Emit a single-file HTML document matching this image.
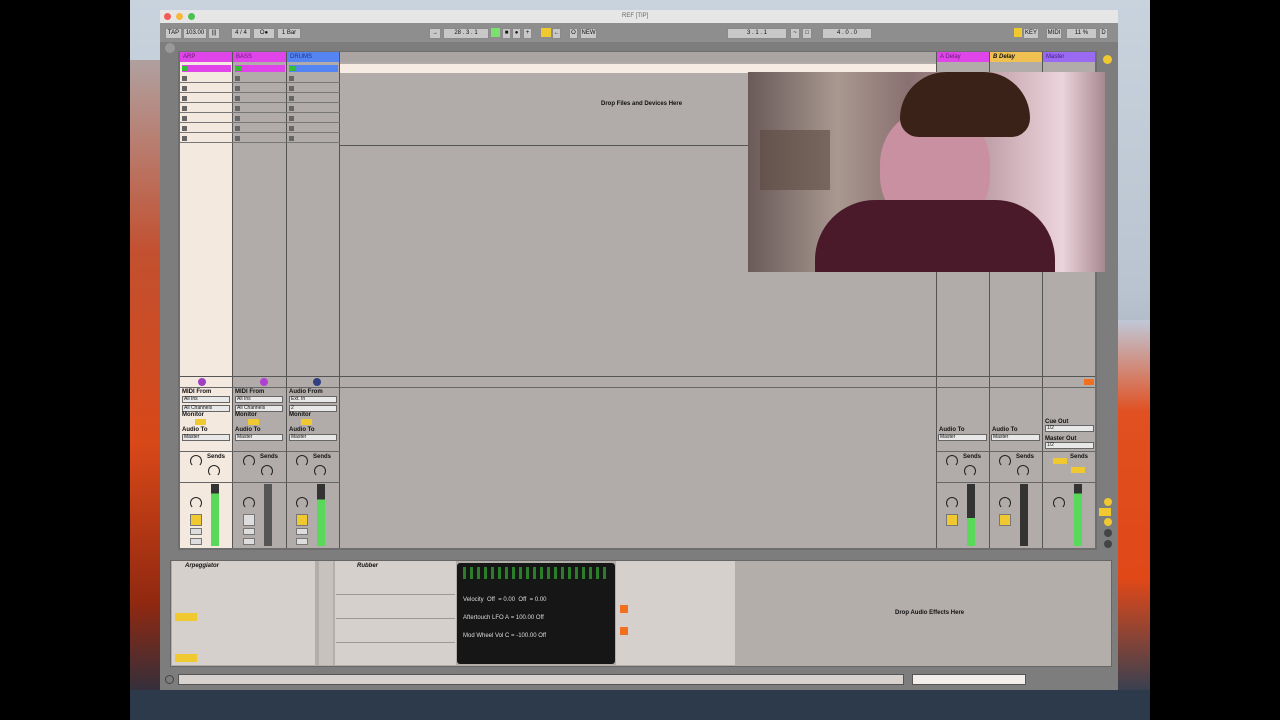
<!DOCTYPE html>
<html><head><meta charset="utf-8"><style>
*{margin:0;padding:0;box-sizing:border-box}
body{width:1280px;height:720px;background:#000;position:relative;overflow:hidden;font-family:"Liberation Sans",sans-serif;font-size:6px;color:#111}
.a{position:absolute}
.t{position:absolute;font-size:6px;font-weight:bold;white-space:nowrap}
.btn{position:absolute;background:#c8c8c8;border:1px solid #8a8a8a;font-size:6px;text-align:center;line-height:9px}
.sq{position:absolute;width:5px;height:5px;background:#666;border:1px solid #333}
.knob{position:absolute;width:12px;height:12px;border:1.5px solid #222;border-radius:50%;border-bottom-color:transparent}
.dd{position:absolute;height:7px;background:#e8e8e8;border:1px solid #666;font-size:5px;line-height:5px;padding-left:1px}
</style></head><body>
<div class="a" style="left:130px;top:0;width:1020px;height:720px;background:linear-gradient(#c9d3de 0,#b9c4d0 40%,#8d98a8 70%,#3c4c60 95%,#2a3648 100%)"></div>
<div class="a" style="left:130px;top:60px;width:32px;height:640px;background:linear-gradient(#b0a0a0,#c25030 30%,#d84818 60%,#902810 85%,#2a3040)"></div>
<div class="a" style="left:1118px;top:320px;width:32px;height:370px;background:linear-gradient(#c0c8d8,#e05020 25%,#e04818 70%,#3a4050)"></div>
<div class="a" style="left:130px;top:690px;width:1020px;height:30px;background:#2c3a4c"></div>
<div class="a" style="left:160px;top:10px;width:958px;height:680px;background:#7d7d7d"></div>
<div class="a" style="left:160px;top:10px;width:958px;height:13px;background:#e6e6e6"></div>
<div class="a" style="left:164px;top:13px;width:7px;height:7px;border-radius:50%;background:#f25c54"></div>
<div class="a" style="left:176px;top:13px;width:7px;height:7px;border-radius:50%;background:#f5b83c"></div>
<div class="a" style="left:188px;top:13px;width:7px;height:7px;border-radius:50%;background:#4cc050"></div>
<div class="t" style="left:622px;top:13px;color:#666;font-weight:normal">REF [TIP]</div>
<div class="a" style="left:160px;top:23px;width:958px;height:19px;background:#8e8e8e"></div>
<div class="btn" style="left:165px;top:28px;width:17px">TAP</div>
<div class="btn" style="left:183px;top:28px;width:24px">103.00</div>
<div class="btn" style="left:208px;top:28px;width:12px">|||</div>
<div class="btn" style="left:231px;top:28px;width:20px">4 / 4</div>
<div class="btn" style="left:253px;top:28px;width:22px">O●</div>
<div class="btn" style="left:277px;top:28px;width:24px">1 Bar</div>
<div class="btn" style="left:429px;top:28px;width:12px">→</div>
<div class="btn" style="left:443px;top:28px;width:46px">28 . 3 . 1</div>
<div class="a" style="left:491px;top:28px;width:9px;height:9px;background:#7ce070"></div>
<div class="btn" style="left:502px;top:28px;width:9px">■</div>
<div class="btn" style="left:512px;top:28px;width:9px">●</div>
<div class="btn" style="left:523px;top:28px;width:9px">+</div>
<div class="a" style="left:541px;top:28px;width:10px;height:9px;background:#f0c830"></div>
<div class="btn" style="left:552px;top:28px;width:9px">←</div>
<div class="btn" style="left:569px;top:28px;width:9px">O</div>
<div class="btn" style="left:580px;top:28px;width:17px">NEW</div>
<div class="btn" style="left:727px;top:28px;width:60px">3 . 1 . 1</div>
<div class="btn" style="left:790px;top:28px;width:10px">~</div>
<div class="btn" style="left:802px;top:28px;width:10px">□</div>
<div class="btn" style="left:822px;top:28px;width:50px">4 . 0 . 0</div>
<div class="a" style="left:1014px;top:28px;width:8px;height:9px;background:#f0c830"></div>
<div class="btn" style="left:1023px;top:28px;width:16px">KEY</div>
<div class="btn" style="left:1046px;top:28px;width:16px">MIDI</div>
<div class="btn" style="left:1066px;top:28px;width:31px">11 %</div>
<div class="btn" style="left:1099px;top:28px;width:9px">D</div>
<div class="a" style="left:165px;top:43px;width:10px;height:10px;border-radius:50%;background:#999"></div>
<div class="a" style="left:178px;top:51px;width:919px;height:499px;background:#6e6e6e"></div>
<div class="a" style="left:180px;top:52px;width:915px;height:496px;background:#b1aba9"></div>
<div class="a" style="left:180px;top:52px;width:52px;height:496px;background:#f4e9df"></div>
<div class="a" style="left:232px;top:52px;width:1px;height:496px;background:#555"></div>
<div class="a" style="left:286px;top:52px;width:1px;height:496px;background:#555"></div>
<div class="a" style="left:339px;top:52px;width:1px;height:496px;background:#555"></div>
<div class="a" style="left:936px;top:52px;width:1px;height:496px;background:#555"></div>
<div class="a" style="left:989px;top:52px;width:1px;height:496px;background:#555"></div>
<div class="a" style="left:1042px;top:52px;width:1px;height:496px;background:#555"></div>
<div class="a" style="left:180px;top:52px;width:52px;height:10px;background:#e045ea"></div>
<div class="a" style="left:233px;top:52px;width:53px;height:10px;background:#e045ea"></div>
<div class="a" style="left:287px;top:52px;width:52px;height:10px;background:#5585f2"></div>
<div class="a" style="left:340px;top:52px;width:596px;height:10px;background:#aaa4a2"></div>
<div class="a" style="left:937px;top:52px;width:52px;height:10px;background:#e045ea"></div>
<div class="a" style="left:990px;top:52px;width:52px;height:10px;background:#f0c050"></div>
<div class="a" style="left:1043px;top:52px;width:52px;height:10px;background:#9a6af2"></div>
<div class="t" style="left:183px;top:54px;color:#602070;font-weight:normal">ARP</div>
<div class="t" style="left:236px;top:54px;color:#602070;font-weight:normal">BASS</div>
<div class="t" style="left:290px;top:54px;color:#203080;font-weight:normal">DRUMS</div>
<div class="t" style="left:940px;top:54px;color:#602070;font-weight:normal">A Delay</div>
<div class="t" style="left:993px;top:54px;font-style:italic">B Delay</div>
<div class="t" style="left:1046px;top:54px;color:#402080;font-weight:normal">Master</div>
<div class="a" style="left:340px;top:64px;width:596px;height:9px;background:#f6ece4"></div>
<div class="a" style="left:182px;top:65px;width:49px;height:7px;background:#e045ea"></div>
<div class="a" style="left:235px;top:65px;width:50px;height:7px;background:#e045ea"></div>
<div class="a" style="left:289px;top:65px;width:49px;height:7px;background:#5585f2"></div>
<div class="a" style="left:182px;top:66px;width:6px;height:5px;background:#30c030"></div>
<div class="a" style="left:235px;top:66px;width:6px;height:5px;background:#30c030"></div>
<div class="a" style="left:289px;top:66px;width:6px;height:5px;background:#30c030"></div>
<div class="a" style="left:180px;top:73px;width:160px;height:73px;background:repeating-linear-gradient(transparent 0,transparent 9px,#777 9px,#777 10px)"></div>
<div class="a" style="left:182px;top:76px;width:5px;height:65px;background:repeating-linear-gradient(#666 0,#666 5px,transparent 5px,transparent 10px)"></div>
<div class="a" style="left:235px;top:76px;width:5px;height:65px;background:repeating-linear-gradient(#666 0,#666 5px,transparent 5px,transparent 10px)"></div>
<div class="a" style="left:289px;top:76px;width:5px;height:65px;background:repeating-linear-gradient(#666 0,#666 5px,transparent 5px,transparent 10px)"></div>
<div class="a" style="left:340px;top:145px;width:596px;height:1px;background:#555"></div>
<div class="t" style="left:601px;top:101px">Drop Files and Devices Here</div>
<div class="a" style="left:180px;top:376px;width:915px;height:1px;background:#555"></div>
<div class="a" style="left:180px;top:387px;width:915px;height:1px;background:#666"></div>
<div class="a" style="left:180px;top:451px;width:160px;height:1px;background:#666"></div>
<div class="a" style="left:180px;top:482px;width:160px;height:1px;background:#666"></div>
<div class="a" style="left:937px;top:451px;width:158px;height:1px;background:#666"></div>
<div class="a" style="left:937px;top:482px;width:158px;height:1px;background:#666"></div>
<div class="a" style="left:198px;top:378px;width:8px;height:8px;border-radius:50%;background:#a040c0"></div>
<div class="a" style="left:260px;top:378px;width:8px;height:8px;border-radius:50%;background:#b040d0"></div>
<div class="a" style="left:313px;top:378px;width:8px;height:8px;border-radius:50%;background:#304080"></div>
<div class="t" style="left:182px;top:389px">MIDI From</div>
<div class="t" style="left:235px;top:389px">MIDI From</div>
<div class="t" style="left:289px;top:389px">Audio From</div>
<div class="dd" style="left:182px;top:396px;width:48px">All Ins</div>
<div class="dd" style="left:235px;top:396px;width:48px">All Ins</div>
<div class="dd" style="left:289px;top:396px;width:48px">Ext. In</div>
<div class="dd" style="left:182px;top:405px;width:48px">All Channels</div>
<div class="dd" style="left:235px;top:405px;width:48px">All Channels</div>
<div class="dd" style="left:289px;top:405px;width:48px">2</div>
<div class="t" style="left:182px;top:412px">Monitor</div><div class="t" style="left:235px;top:412px">Monitor</div><div class="t" style="left:289px;top:412px">Monitor</div>
<div class="a" style="left:195px;top:419px;width:11px;height:6px;background:#f0c830"></div>
<div class="a" style="left:248px;top:419px;width:11px;height:6px;background:#f0c830"></div>
<div class="a" style="left:301px;top:419px;width:11px;height:6px;background:#f0c830"></div>
<div class="t" style="left:182px;top:427px">Audio To</div><div class="t" style="left:235px;top:427px">Audio To</div><div class="t" style="left:289px;top:427px">Audio To</div>
<div class="dd" style="left:182px;top:434px;width:48px">Master</div>
<div class="dd" style="left:235px;top:434px;width:48px">Master</div>
<div class="dd" style="left:289px;top:434px;width:48px">Master</div>
<div class="t" style="left:939px;top:427px">Audio To</div><div class="t" style="left:992px;top:427px">Audio To</div>
<div class="dd" style="left:938px;top:434px;width:49px">Master</div>
<div class="dd" style="left:991px;top:434px;width:49px">Master</div>
<div class="t" style="left:1045px;top:419px">Cue Out</div><div class="t" style="left:1045px;top:436px">Master Out</div>
<div class="dd" style="left:1045px;top:425px;width:49px">1/2</div>
<div class="dd" style="left:1045px;top:442px;width:49px">1/2</div>
<div class="a" style="left:1084px;top:379px;width:10px;height:6px;background:#f07020"></div>
<div class="knob" style="left:190px;top:455px"></div><div class="knob" style="left:208px;top:465px"></div>
<div class="knob" style="left:243px;top:455px"></div><div class="knob" style="left:261px;top:465px"></div>
<div class="knob" style="left:296px;top:455px"></div><div class="knob" style="left:314px;top:465px"></div>
<div class="knob" style="left:946px;top:455px"></div><div class="knob" style="left:964px;top:465px"></div>
<div class="knob" style="left:999px;top:455px"></div><div class="knob" style="left:1017px;top:465px"></div>
<div class="t" style="left:207px;top:454px">Sends</div><div class="t" style="left:260px;top:454px">Sends</div><div class="t" style="left:313px;top:454px">Sends</div>
<div class="t" style="left:963px;top:454px">Sends</div><div class="t" style="left:1016px;top:454px">Sends</div><div class="t" style="left:1070px;top:454px">Sends</div>
<div class="a" style="left:1053px;top:458px;width:14px;height:6px;background:#f0c830"></div>
<div class="a" style="left:1071px;top:467px;width:14px;height:6px;background:#f0c830"></div>
<div class="knob" style="left:190px;top:497px"></div><div class="knob" style="left:243px;top:497px"></div><div class="knob" style="left:296px;top:497px"></div>
<div class="knob" style="left:946px;top:497px"></div><div class="knob" style="left:999px;top:497px"></div><div class="knob" style="left:1053px;top:497px"></div>
<div class="a" style="left:190px;top:514px;width:12px;height:12px;background:#f0c830;border:1px solid #777"></div>
<div class="a" style="left:243px;top:514px;width:12px;height:12px;background:#ddd;border:1px solid #777"></div>
<div class="a" style="left:296px;top:514px;width:12px;height:12px;background:#f0c830;border:1px solid #777"></div>
<div class="a" style="left:946px;top:514px;width:12px;height:12px;background:#f0c830;border:1px solid #777"></div>
<div class="a" style="left:999px;top:514px;width:12px;height:12px;background:#f0c830;border:1px solid #777"></div>
<div class="a" style="left:190px;top:528px;width:12px;height:7px;background:#ddd;border:1px solid #777"></div>
<div class="a" style="left:243px;top:528px;width:12px;height:7px;background:#ddd;border:1px solid #777"></div>
<div class="a" style="left:296px;top:528px;width:12px;height:7px;background:#ddd;border:1px solid #777"></div>
<div class="a" style="left:190px;top:538px;width:12px;height:7px;background:#ddd;border:1px solid #777"></div>
<div class="a" style="left:243px;top:538px;width:12px;height:7px;background:#ddd;border:1px solid #777"></div>
<div class="a" style="left:296px;top:538px;width:12px;height:7px;background:#ddd;border:1px solid #777"></div>
<div class="a" style="left:211px;top:484px;width:8px;height:62px;background:linear-gradient(#333 0,#333 15%,#5ad85a 15%,#5ad85a 100%)"></div>
<div class="a" style="left:264px;top:484px;width:8px;height:62px;background:#555"></div>
<div class="a" style="left:317px;top:484px;width:8px;height:62px;background:linear-gradient(#333 0,#333 25%,#5ad85a 25%)"></div>
<div class="a" style="left:967px;top:484px;width:8px;height:62px;background:linear-gradient(#333 0,#333 55%,#5ad85a 55%)"></div>
<div class="a" style="left:1020px;top:484px;width:8px;height:62px;background:#333"></div>
<div class="a" style="left:1074px;top:484px;width:8px;height:62px;background:linear-gradient(#333 0,#333 15%,#5ad85a 15%)"></div>
<!-- video -->
<div class="a" style="left:748px;top:72px;width:357px;height:200px;background:linear-gradient(90deg,#6a5a58 0,#a89890 25%,#8a7070 45%,#c8a8b0 70%,#ecd4dc 88%,#a88890 100%)"></div>
<div class="a" style="left:760px;top:130px;width:70px;height:60px;background:#5a4a40;opacity:.6"></div>
<div class="a" style="left:880px;top:110px;width:110px;height:120px;background:#c890a0;border-radius:45%"></div>
<div class="a" style="left:815px;top:200px;width:240px;height:72px;background:#4a1a2a;border-radius:60px 60px 0 0"></div>
<div class="a" style="left:900px;top:72px;width:130px;height:65px;background:#3a2218;border-radius:50px 50px 20px 20px"></div>
<div class="a" style="left:1103px;top:55px;width:9px;height:9px;border-radius:50%;background:#f0c830"></div>
<div class="a" style="left:1104px;top:498px;width:8px;height:8px;border-radius:50%;background:#f0c830"></div>
<div class="a" style="left:1099px;top:508px;width:12px;height:8px;background:#f0c830"></div>
<div class="a" style="left:1104px;top:518px;width:8px;height:8px;border-radius:50%;background:#f0c830"></div>
<div class="a" style="left:1104px;top:529px;width:8px;height:8px;border-radius:50%;background:#444"></div>
<div class="a" style="left:1104px;top:540px;width:8px;height:8px;border-radius:50%;background:#444"></div>
<!-- device area -->
<div class="a" style="left:170px;top:560px;width:942px;height:107px;background:#b4aeab;border:1px solid #666"></div>
<div class="a" style="left:172px;top:561px;width:143px;height:104px;background:#d6d0cc"></div>
<div class="t" style="left:185px;top:563px;font-style:italic">Arpeggiator</div>
<div class="a" style="left:319px;top:561px;width:14px;height:104px;background:#c8c2be"></div>
<div class="a" style="left:335px;top:561px;width:121px;height:104px;background:#d6d0cc"></div>
<div class="a" style="left:336px;top:594px;width:119px;height:1px;background:#999"></div>
<div class="a" style="left:336px;top:618px;width:119px;height:1px;background:#999"></div>
<div class="a" style="left:336px;top:642px;width:119px;height:1px;background:#999"></div>
<div class="t" style="left:357px;top:563px;font-style:italic">Rubber</div>
<div class="a" style="left:457px;top:563px;width:158px;height:101px;background:#161616;border-radius:3px"></div>
<div class="a" style="left:616px;top:561px;width:119px;height:104px;background:#d6d0cc"></div>
<div class="a" style="left:175px;top:613px;width:22px;height:8px;background:#f0c830"></div>
<div class="a" style="left:175px;top:654px;width:22px;height:8px;background:#f0c830"></div>
<div class="a" style="left:620px;top:605px;width:8px;height:8px;background:#f07020"></div>
<div class="a" style="left:620px;top:627px;width:8px;height:8px;background:#f07020"></div>
<div class="t" style="left:895px;top:610px">Drop Audio Effects Here</div>
<div class="t" style="left:463px;top:597px;color:#ddd;font-weight:normal">Velocity&nbsp;&nbsp;Off&nbsp;&nbsp;= 0.00&nbsp;&nbsp;Off&nbsp;&nbsp;= 0.00</div>
<div class="t" style="left:463px;top:615px;color:#ddd;font-weight:normal">Aftertouch&nbsp;LFO A&nbsp;= 100.00&nbsp;Off</div>
<div class="t" style="left:463px;top:633px;color:#ddd;font-weight:normal">Mod Wheel&nbsp;Vol C&nbsp;= -100.00&nbsp;Off</div>
<div class="a" style="left:463px;top:567px;width:146px;height:12px;background:repeating-linear-gradient(90deg,#3a3 0,#3a3 3px,transparent 3px,transparent 7px);opacity:.7"></div>
<div class="a" style="left:178px;top:674px;width:726px;height:11px;background:#d8d2ce;border:1px solid #555"></div>
<div class="a" style="left:912px;top:674px;width:114px;height:11px;background:#f4eeea;border:1px solid #555"></div>
<div class="a" style="left:165px;top:675px;width:9px;height:9px;border-radius:50%;border:1px solid #444"></div>
</body></html>
